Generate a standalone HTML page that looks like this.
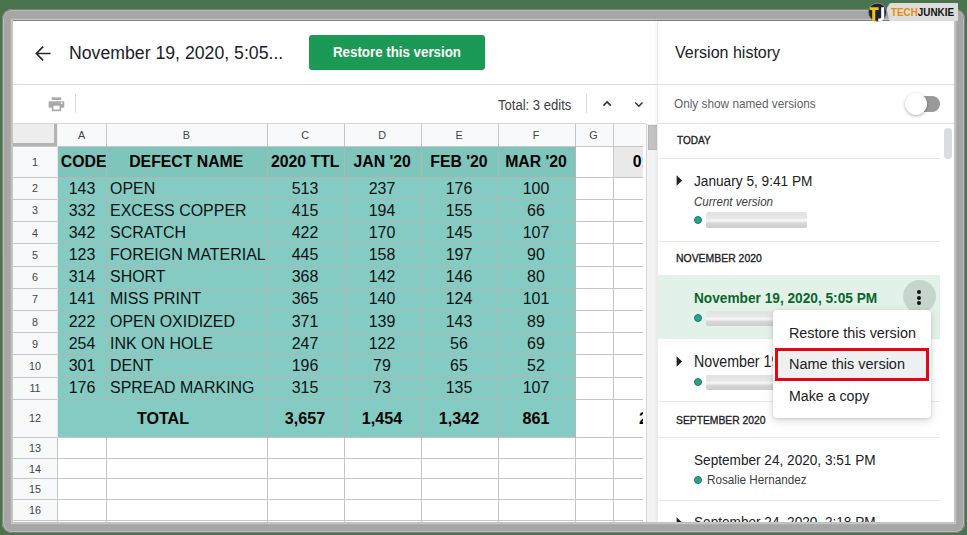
<!DOCTYPE html>
<html><head><meta charset="utf-8"><style>
html,body{margin:0;padding:0;}
body{width:967px;height:535px;position:relative;overflow:hidden;background:#49744e;font-family:"Liberation Sans",sans-serif;}
.t{position:absolute;white-space:nowrap;}
.r{position:absolute;}
svg.r{overflow:visible;}
</style></head><body>
<div class="r" style="left:2.00px;top:8.70px;width:963.00px;height:524.30px;background:#a6a6a6;border-radius:10px;box-shadow:inset 0 0 0 0.9px #7d7d7d, inset 0 0 0 2px #bababa;"></div>
<div class="r" style="left:13.00px;top:21.00px;width:940.70px;height:501.30px;background:#ffffff;box-shadow:0 -0.9px 0 0 #7a7a7a, 0 0 0 2.2px #c4c4c4;"></div>
<svg class="r" style="left:34px;top:43.5px" width="19" height="19" viewBox="0 0 19 19"><path d="M16.6 9.5H2.8M9.1 2.7L2.4 9.5l6.7 6.8" fill="none" stroke="#26282b" stroke-width="1.7"/></svg>
<div class="t" style="left:69.29px;top:43.00px;font-size:18.99px;line-height:18.99px;color:#202124;font-weight:normal;font-style:normal;transform:scaleX(0.9311);transform-origin:0 0;">November 19, 2020, 5:05...</div>
<div class="r" style="left:309.30px;top:34.70px;width:175.40px;height:35.30px;background:#1b9a55;border-radius:3px;"></div>
<div class="t" style="left:333.07px;top:45.00px;font-size:14.64px;line-height:14.64px;color:#fff;font-weight:bold;font-style:normal;transform:scaleX(0.9100);transform-origin:0 0;">Restore this version</div>
<div class="r" style="left:12.50px;top:84.00px;width:645.50px;height:1.00px;background:#dcdcdc;"></div>
<svg class="r" style="left:48px;top:96px" width="17" height="16" viewBox="0 0 17 16"><g fill="#a9a9a9"><rect x="3.8" y="1.3" width="9.4" height="2.7"/><rect x="0.6" y="5.3" width="15.7" height="6.5" rx="1.3"/><rect x="3.8" y="8.5" width="9.4" height="6.7"/></g><rect x="5.5" y="9.8" width="6" height="3.7" fill="#fff"/><circle cx="13.6" cy="7.2" r="0.9" fill="#fff"/></svg>
<div class="r" style="left:75.00px;top:94.00px;width:1.00px;height:19.00px;background:#dadce0;"></div>
<div class="t" style="left:498.44px;top:99.00px;font-size:13.77px;line-height:13.77px;color:#3c4043;font-weight:normal;font-style:normal;transform:scaleX(0.9496);transform-origin:0 0;">Total: 3 edits</div>
<div class="r" style="left:586.20px;top:94.40px;width:1.00px;height:19.10px;background:#dadce0;"></div>
<svg class="r" style="left:600px;top:98px" width="14" height="12" viewBox="0 0 14 12"><path d="M3.4 7.6L7.1 3.9l3.7 3.7" fill="none" stroke="#303134" stroke-width="1.5"/></svg>
<svg class="r" style="left:632px;top:98px" width="14" height="12" viewBox="0 0 14 12"><path d="M3.2 4.5L6.8 8.2l3.7-3.7" fill="none" stroke="#303134" stroke-width="1.5"/></svg>
<div class="r" style="left:12.50px;top:123.50px;width:633.50px;height:399.00px;background:#ffffff;"></div>
<div class="r" style="left:12.50px;top:123.50px;width:633.50px;height:22.50px;background:#f8f9fa;"></div>
<div class="r" style="left:12.50px;top:146.00px;width:45.00px;height:376.50px;background:#f8f9fa;"></div>
<div class="r" style="left:57.50px;top:146.00px;width:517.50px;height:31.20px;background:#7ec5bc;"></div>
<div class="r" style="left:57.50px;top:177.20px;width:517.50px;height:260.30px;background:#84ccc3;"></div>
<div class="r" style="left:613.00px;top:146.00px;width:30.00px;height:31.20px;background:#e9e9e9;"></div>
<div class="r" style="left:12.50px;top:123.00px;width:633.50px;height:1.00px;background:#d8d8d8;"></div>
<div class="r" style="left:12.50px;top:145.50px;width:630.50px;height:1.00px;background:#c6c6c6;"></div>
<div class="r" style="left:12.50px;top:176.70px;width:45.00px;height:1.00px;background:#c6c6c6;"></div>
<div class="r" style="left:575.00px;top:176.70px;width:68.00px;height:1.00px;background:#c6c6c6;"></div>
<div class="r" style="left:57.50px;top:176.70px;width:517.50px;height:1.00px;background:#adb8b5;"></div>
<div class="r" style="left:12.50px;top:198.90px;width:45.00px;height:1.00px;background:#c6c6c6;"></div>
<div class="r" style="left:575.00px;top:198.90px;width:68.00px;height:1.00px;background:#c6c6c6;"></div>
<div class="r" style="left:57.50px;top:198.90px;width:517.50px;height:1.00px;background:#adb8b5;"></div>
<div class="r" style="left:12.50px;top:221.10px;width:45.00px;height:1.00px;background:#c6c6c6;"></div>
<div class="r" style="left:575.00px;top:221.10px;width:68.00px;height:1.00px;background:#c6c6c6;"></div>
<div class="r" style="left:57.50px;top:221.10px;width:517.50px;height:1.00px;background:#adb8b5;"></div>
<div class="r" style="left:12.50px;top:243.30px;width:45.00px;height:1.00px;background:#c6c6c6;"></div>
<div class="r" style="left:575.00px;top:243.30px;width:68.00px;height:1.00px;background:#c6c6c6;"></div>
<div class="r" style="left:57.50px;top:243.30px;width:517.50px;height:1.00px;background:#adb8b5;"></div>
<div class="r" style="left:12.50px;top:265.50px;width:45.00px;height:1.00px;background:#c6c6c6;"></div>
<div class="r" style="left:575.00px;top:265.50px;width:68.00px;height:1.00px;background:#c6c6c6;"></div>
<div class="r" style="left:57.50px;top:265.50px;width:517.50px;height:1.00px;background:#adb8b5;"></div>
<div class="r" style="left:12.50px;top:287.70px;width:45.00px;height:1.00px;background:#c6c6c6;"></div>
<div class="r" style="left:575.00px;top:287.70px;width:68.00px;height:1.00px;background:#c6c6c6;"></div>
<div class="r" style="left:57.50px;top:287.70px;width:517.50px;height:1.00px;background:#adb8b5;"></div>
<div class="r" style="left:12.50px;top:309.90px;width:45.00px;height:1.00px;background:#c6c6c6;"></div>
<div class="r" style="left:575.00px;top:309.90px;width:68.00px;height:1.00px;background:#c6c6c6;"></div>
<div class="r" style="left:57.50px;top:309.90px;width:517.50px;height:1.00px;background:#adb8b5;"></div>
<div class="r" style="left:12.50px;top:332.10px;width:45.00px;height:1.00px;background:#c6c6c6;"></div>
<div class="r" style="left:575.00px;top:332.10px;width:68.00px;height:1.00px;background:#c6c6c6;"></div>
<div class="r" style="left:57.50px;top:332.10px;width:517.50px;height:1.00px;background:#adb8b5;"></div>
<div class="r" style="left:12.50px;top:354.30px;width:45.00px;height:1.00px;background:#c6c6c6;"></div>
<div class="r" style="left:575.00px;top:354.30px;width:68.00px;height:1.00px;background:#c6c6c6;"></div>
<div class="r" style="left:57.50px;top:354.30px;width:517.50px;height:1.00px;background:#adb8b5;"></div>
<div class="r" style="left:12.50px;top:376.50px;width:45.00px;height:1.00px;background:#c6c6c6;"></div>
<div class="r" style="left:575.00px;top:376.50px;width:68.00px;height:1.00px;background:#c6c6c6;"></div>
<div class="r" style="left:57.50px;top:376.50px;width:517.50px;height:1.00px;background:#adb8b5;"></div>
<div class="r" style="left:12.50px;top:398.70px;width:45.00px;height:1.00px;background:#c6c6c6;"></div>
<div class="r" style="left:575.00px;top:398.70px;width:68.00px;height:1.00px;background:#c6c6c6;"></div>
<div class="r" style="left:57.50px;top:398.70px;width:517.50px;height:1.00px;background:#adb8b5;"></div>
<div class="r" style="left:12.50px;top:437.00px;width:45.00px;height:1.00px;background:#c6c6c6;"></div>
<div class="r" style="left:575.00px;top:437.00px;width:68.00px;height:1.00px;background:#c6c6c6;"></div>
<div class="r" style="left:57.50px;top:437.00px;width:517.50px;height:1.00px;background:#c6c6c6;"></div>
<div class="r" style="left:12.50px;top:457.80px;width:45.00px;height:1.00px;background:#c6c6c6;"></div>
<div class="r" style="left:575.00px;top:457.80px;width:68.00px;height:1.00px;background:#c6c6c6;"></div>
<div class="r" style="left:57.50px;top:457.80px;width:517.50px;height:1.00px;background:#c6c6c6;"></div>
<div class="r" style="left:12.50px;top:478.30px;width:45.00px;height:1.00px;background:#c6c6c6;"></div>
<div class="r" style="left:575.00px;top:478.30px;width:68.00px;height:1.00px;background:#c6c6c6;"></div>
<div class="r" style="left:57.50px;top:478.30px;width:517.50px;height:1.00px;background:#c6c6c6;"></div>
<div class="r" style="left:12.50px;top:498.80px;width:45.00px;height:1.00px;background:#c6c6c6;"></div>
<div class="r" style="left:575.00px;top:498.80px;width:68.00px;height:1.00px;background:#c6c6c6;"></div>
<div class="r" style="left:57.50px;top:498.80px;width:517.50px;height:1.00px;background:#c6c6c6;"></div>
<div class="r" style="left:12.50px;top:519.80px;width:45.00px;height:1.00px;background:#c6c6c6;"></div>
<div class="r" style="left:575.00px;top:519.80px;width:68.00px;height:1.00px;background:#c6c6c6;"></div>
<div class="r" style="left:57.50px;top:519.80px;width:517.50px;height:1.00px;background:#c6c6c6;"></div>
<div class="r" style="left:57.00px;top:123.50px;width:1.00px;height:22.50px;background:#c6c6c6;"></div>
<div class="r" style="left:57.00px;top:146.00px;width:1.00px;height:291.50px;background:#e6e6e6;"></div>
<div class="r" style="left:57.00px;top:437.50px;width:1.00px;height:85.00px;background:#c6c6c6;"></div>
<div class="r" style="left:106.00px;top:123.50px;width:1.00px;height:22.50px;background:#c6c6c6;"></div>
<div class="r" style="left:106.00px;top:146.00px;width:1.00px;height:291.50px;background:#adb8b5;"></div>
<div class="r" style="left:106.00px;top:437.50px;width:1.00px;height:85.00px;background:#c6c6c6;"></div>
<div class="r" style="left:266.50px;top:123.50px;width:1.00px;height:22.50px;background:#c6c6c6;"></div>
<div class="r" style="left:266.50px;top:146.00px;width:1.00px;height:291.50px;background:#adb8b5;"></div>
<div class="r" style="left:266.50px;top:437.50px;width:1.00px;height:85.00px;background:#c6c6c6;"></div>
<div class="r" style="left:344.00px;top:123.50px;width:1.00px;height:22.50px;background:#c6c6c6;"></div>
<div class="r" style="left:344.00px;top:146.00px;width:1.00px;height:291.50px;background:#adb8b5;"></div>
<div class="r" style="left:344.00px;top:437.50px;width:1.00px;height:85.00px;background:#c6c6c6;"></div>
<div class="r" style="left:420.50px;top:123.50px;width:1.00px;height:22.50px;background:#c6c6c6;"></div>
<div class="r" style="left:420.50px;top:146.00px;width:1.00px;height:291.50px;background:#adb8b5;"></div>
<div class="r" style="left:420.50px;top:437.50px;width:1.00px;height:85.00px;background:#c6c6c6;"></div>
<div class="r" style="left:497.50px;top:123.50px;width:1.00px;height:22.50px;background:#c6c6c6;"></div>
<div class="r" style="left:497.50px;top:146.00px;width:1.00px;height:291.50px;background:#adb8b5;"></div>
<div class="r" style="left:497.50px;top:437.50px;width:1.00px;height:85.00px;background:#c6c6c6;"></div>
<div class="r" style="left:574.50px;top:123.50px;width:1.00px;height:22.50px;background:#c6c6c6;"></div>
<div class="r" style="left:574.50px;top:146.00px;width:1.00px;height:291.50px;background:#adb8b5;"></div>
<div class="r" style="left:574.50px;top:437.50px;width:1.00px;height:85.00px;background:#c6c6c6;"></div>
<div class="r" style="left:612.50px;top:123.50px;width:1.00px;height:399.00px;background:#c6c6c6;"></div>
<div class="r" style="left:106.00px;top:399.70px;width:1.00px;height:37.30px;background:#84ccc3;"></div>
<div class="r" style="left:12.50px;top:123.50px;width:45.00px;height:22.50px;background:#ededed;"></div>
<div class="r" style="left:53.80px;top:123.50px;width:3.50px;height:22.50px;background:#b3b3b3;"></div>
<div class="r" style="left:12.50px;top:142.80px;width:44.80px;height:3.20px;background:#b3b3b3;"></div>
<div class="t" style="left:-218.50px;top:130.00px;font-size:10.80px;line-height:10.80px;color:#444;font-weight:normal;font-style:normal;width:600px;text-align:center;">A</div>
<div class="t" style="left:-113.75px;top:130.00px;font-size:10.80px;line-height:10.80px;color:#444;font-weight:normal;font-style:normal;width:600px;text-align:center;">B</div>
<div class="t" style="left:5.25px;top:130.00px;font-size:10.80px;line-height:10.80px;color:#444;font-weight:normal;font-style:normal;width:600px;text-align:center;">C</div>
<div class="t" style="left:82.25px;top:130.00px;font-size:10.80px;line-height:10.80px;color:#444;font-weight:normal;font-style:normal;width:600px;text-align:center;">D</div>
<div class="t" style="left:159.00px;top:130.00px;font-size:10.80px;line-height:10.80px;color:#444;font-weight:normal;font-style:normal;width:600px;text-align:center;">E</div>
<div class="t" style="left:236.00px;top:130.00px;font-size:10.80px;line-height:10.80px;color:#444;font-weight:normal;font-style:normal;width:600px;text-align:center;">F</div>
<div class="t" style="left:293.50px;top:130.00px;font-size:10.80px;line-height:10.80px;color:#444;font-weight:normal;font-style:normal;width:600px;text-align:center;">G</div>
<div class="t" style="left:-265.00px;top:157.00px;font-size:10.80px;line-height:10.80px;color:#444;font-weight:normal;font-style:normal;width:600px;text-align:center;">1</div>
<div class="t" style="left:-265.00px;top:183.00px;font-size:10.80px;line-height:10.80px;color:#444;font-weight:normal;font-style:normal;width:600px;text-align:center;">2</div>
<div class="t" style="left:-265.00px;top:205.00px;font-size:10.80px;line-height:10.80px;color:#444;font-weight:normal;font-style:normal;width:600px;text-align:center;">3</div>
<div class="t" style="left:-265.00px;top:228.00px;font-size:10.80px;line-height:10.80px;color:#444;font-weight:normal;font-style:normal;width:600px;text-align:center;">4</div>
<div class="t" style="left:-265.00px;top:250.00px;font-size:10.80px;line-height:10.80px;color:#444;font-weight:normal;font-style:normal;width:600px;text-align:center;">5</div>
<div class="t" style="left:-265.00px;top:272.00px;font-size:10.80px;line-height:10.80px;color:#444;font-weight:normal;font-style:normal;width:600px;text-align:center;">6</div>
<div class="t" style="left:-265.00px;top:294.00px;font-size:10.80px;line-height:10.80px;color:#444;font-weight:normal;font-style:normal;width:600px;text-align:center;">7</div>
<div class="t" style="left:-265.00px;top:317.00px;font-size:10.80px;line-height:10.80px;color:#444;font-weight:normal;font-style:normal;width:600px;text-align:center;">8</div>
<div class="t" style="left:-265.00px;top:339.00px;font-size:10.80px;line-height:10.80px;color:#444;font-weight:normal;font-style:normal;width:600px;text-align:center;">9</div>
<div class="t" style="left:-265.00px;top:361.00px;font-size:10.80px;line-height:10.80px;color:#444;font-weight:normal;font-style:normal;width:600px;text-align:center;">10</div>
<div class="t" style="left:-265.00px;top:383.00px;font-size:10.80px;line-height:10.80px;color:#444;font-weight:normal;font-style:normal;width:600px;text-align:center;">11</div>
<div class="t" style="left:-265.00px;top:413.00px;font-size:10.80px;line-height:10.80px;color:#444;font-weight:normal;font-style:normal;width:600px;text-align:center;">12</div>
<div class="t" style="left:-265.00px;top:443.00px;font-size:10.80px;line-height:10.80px;color:#444;font-weight:normal;font-style:normal;width:600px;text-align:center;">13</div>
<div class="t" style="left:-265.00px;top:464.00px;font-size:10.80px;line-height:10.80px;color:#444;font-weight:normal;font-style:normal;width:600px;text-align:center;">14</div>
<div class="t" style="left:-265.00px;top:484.00px;font-size:10.80px;line-height:10.80px;color:#444;font-weight:normal;font-style:normal;width:600px;text-align:center;">15</div>
<div class="t" style="left:-265.00px;top:505.00px;font-size:10.80px;line-height:10.80px;color:#444;font-weight:normal;font-style:normal;width:600px;text-align:center;">16</div>
<div class="t" style="left:60.87px;top:154.00px;font-size:15.80px;line-height:15.80px;color:#000;font-weight:bold;font-style:normal;width:45.13px;overflow:hidden;">CODE</div>
<div class="t" style="left:-113.75px;top:154.00px;font-size:15.80px;line-height:15.80px;color:#000;font-weight:bold;font-style:normal;width:600px;text-align:center;">DEFECT NAME</div>
<div class="t" style="left:5.25px;top:154.00px;font-size:15.80px;line-height:15.80px;color:#000;font-weight:bold;font-style:normal;width:600px;text-align:center;">2020 TTL</div>
<div class="t" style="left:82.25px;top:154.00px;font-size:15.80px;line-height:15.80px;color:#000;font-weight:bold;font-style:normal;width:600px;text-align:center;">JAN '20</div>
<div class="t" style="left:159.00px;top:154.00px;font-size:15.80px;line-height:15.80px;color:#000;font-weight:bold;font-style:normal;width:600px;text-align:center;">FEB '20</div>
<div class="t" style="left:236.00px;top:154.00px;font-size:15.80px;line-height:15.80px;color:#000;font-weight:bold;font-style:normal;width:600px;text-align:center;">MAR '20</div>
<div class="t" style="left:632.77px;top:154.00px;font-size:15.80px;line-height:15.80px;color:#000;font-weight:bold;font-style:normal;width:10.23px;overflow:hidden;">0:</div>
<div class="t" style="left:-218.50px;top:180.00px;font-size:16.30px;line-height:16.30px;color:#111;font-weight:normal;font-style:normal;transform:scaleX(0.9800);transform-origin:300px 0;width:600px;text-align:center;">143</div>
<div class="t" style="left:110.03px;top:180.00px;font-size:16.30px;line-height:16.30px;color:#111;font-weight:normal;font-style:normal;transform:scaleX(0.9800);transform-origin:0 0;">OPEN</div>
<div class="t" style="left:5.25px;top:180.00px;font-size:16.30px;line-height:16.30px;color:#111;font-weight:normal;font-style:normal;transform:scaleX(0.9800);transform-origin:300px 0;width:600px;text-align:center;">513</div>
<div class="t" style="left:82.25px;top:180.00px;font-size:16.30px;line-height:16.30px;color:#111;font-weight:normal;font-style:normal;transform:scaleX(0.9800);transform-origin:300px 0;width:600px;text-align:center;">237</div>
<div class="t" style="left:159.00px;top:180.00px;font-size:16.30px;line-height:16.30px;color:#111;font-weight:normal;font-style:normal;transform:scaleX(0.9800);transform-origin:300px 0;width:600px;text-align:center;">176</div>
<div class="t" style="left:236.00px;top:180.00px;font-size:16.30px;line-height:16.30px;color:#111;font-weight:normal;font-style:normal;transform:scaleX(0.9800);transform-origin:300px 0;width:600px;text-align:center;">100</div>
<div class="t" style="left:-218.50px;top:202.00px;font-size:16.30px;line-height:16.30px;color:#111;font-weight:normal;font-style:normal;transform:scaleX(0.9800);transform-origin:300px 0;width:600px;text-align:center;">332</div>
<div class="t" style="left:110.03px;top:202.00px;font-size:16.30px;line-height:16.30px;color:#111;font-weight:normal;font-style:normal;transform:scaleX(0.9800);transform-origin:0 0;">EXCESS COPPER</div>
<div class="t" style="left:5.25px;top:202.00px;font-size:16.30px;line-height:16.30px;color:#111;font-weight:normal;font-style:normal;transform:scaleX(0.9800);transform-origin:300px 0;width:600px;text-align:center;">415</div>
<div class="t" style="left:82.25px;top:202.00px;font-size:16.30px;line-height:16.30px;color:#111;font-weight:normal;font-style:normal;transform:scaleX(0.9800);transform-origin:300px 0;width:600px;text-align:center;">194</div>
<div class="t" style="left:159.00px;top:202.00px;font-size:16.30px;line-height:16.30px;color:#111;font-weight:normal;font-style:normal;transform:scaleX(0.9800);transform-origin:300px 0;width:600px;text-align:center;">155</div>
<div class="t" style="left:236.00px;top:202.00px;font-size:16.30px;line-height:16.30px;color:#111;font-weight:normal;font-style:normal;transform:scaleX(0.9800);transform-origin:300px 0;width:600px;text-align:center;">66</div>
<div class="t" style="left:-218.50px;top:224.00px;font-size:16.30px;line-height:16.30px;color:#111;font-weight:normal;font-style:normal;transform:scaleX(0.9800);transform-origin:300px 0;width:600px;text-align:center;">342</div>
<div class="t" style="left:110.03px;top:224.00px;font-size:16.30px;line-height:16.30px;color:#111;font-weight:normal;font-style:normal;transform:scaleX(0.9800);transform-origin:0 0;">SCRATCH</div>
<div class="t" style="left:5.25px;top:224.00px;font-size:16.30px;line-height:16.30px;color:#111;font-weight:normal;font-style:normal;transform:scaleX(0.9800);transform-origin:300px 0;width:600px;text-align:center;">422</div>
<div class="t" style="left:82.25px;top:224.00px;font-size:16.30px;line-height:16.30px;color:#111;font-weight:normal;font-style:normal;transform:scaleX(0.9800);transform-origin:300px 0;width:600px;text-align:center;">170</div>
<div class="t" style="left:159.00px;top:224.00px;font-size:16.30px;line-height:16.30px;color:#111;font-weight:normal;font-style:normal;transform:scaleX(0.9800);transform-origin:300px 0;width:600px;text-align:center;">145</div>
<div class="t" style="left:236.00px;top:224.00px;font-size:16.30px;line-height:16.30px;color:#111;font-weight:normal;font-style:normal;transform:scaleX(0.9800);transform-origin:300px 0;width:600px;text-align:center;">107</div>
<div class="t" style="left:-218.50px;top:246.00px;font-size:16.30px;line-height:16.30px;color:#111;font-weight:normal;font-style:normal;transform:scaleX(0.9800);transform-origin:300px 0;width:600px;text-align:center;">123</div>
<div class="t" style="left:110.03px;top:246.00px;font-size:16.30px;line-height:16.30px;color:#111;font-weight:normal;font-style:normal;transform:scaleX(0.9800);transform-origin:0 0;">FOREIGN MATERIAL</div>
<div class="t" style="left:5.25px;top:246.00px;font-size:16.30px;line-height:16.30px;color:#111;font-weight:normal;font-style:normal;transform:scaleX(0.9800);transform-origin:300px 0;width:600px;text-align:center;">445</div>
<div class="t" style="left:82.25px;top:246.00px;font-size:16.30px;line-height:16.30px;color:#111;font-weight:normal;font-style:normal;transform:scaleX(0.9800);transform-origin:300px 0;width:600px;text-align:center;">158</div>
<div class="t" style="left:159.00px;top:246.00px;font-size:16.30px;line-height:16.30px;color:#111;font-weight:normal;font-style:normal;transform:scaleX(0.9800);transform-origin:300px 0;width:600px;text-align:center;">197</div>
<div class="t" style="left:236.00px;top:246.00px;font-size:16.30px;line-height:16.30px;color:#111;font-weight:normal;font-style:normal;transform:scaleX(0.9800);transform-origin:300px 0;width:600px;text-align:center;">90</div>
<div class="t" style="left:-218.50px;top:268.00px;font-size:16.30px;line-height:16.30px;color:#111;font-weight:normal;font-style:normal;transform:scaleX(0.9800);transform-origin:300px 0;width:600px;text-align:center;">314</div>
<div class="t" style="left:110.03px;top:268.00px;font-size:16.30px;line-height:16.30px;color:#111;font-weight:normal;font-style:normal;transform:scaleX(0.9800);transform-origin:0 0;">SHORT</div>
<div class="t" style="left:5.25px;top:268.00px;font-size:16.30px;line-height:16.30px;color:#111;font-weight:normal;font-style:normal;transform:scaleX(0.9800);transform-origin:300px 0;width:600px;text-align:center;">368</div>
<div class="t" style="left:82.25px;top:268.00px;font-size:16.30px;line-height:16.30px;color:#111;font-weight:normal;font-style:normal;transform:scaleX(0.9800);transform-origin:300px 0;width:600px;text-align:center;">142</div>
<div class="t" style="left:159.00px;top:268.00px;font-size:16.30px;line-height:16.30px;color:#111;font-weight:normal;font-style:normal;transform:scaleX(0.9800);transform-origin:300px 0;width:600px;text-align:center;">146</div>
<div class="t" style="left:236.00px;top:268.00px;font-size:16.30px;line-height:16.30px;color:#111;font-weight:normal;font-style:normal;transform:scaleX(0.9800);transform-origin:300px 0;width:600px;text-align:center;">80</div>
<div class="t" style="left:-218.50px;top:290.00px;font-size:16.30px;line-height:16.30px;color:#111;font-weight:normal;font-style:normal;transform:scaleX(0.9800);transform-origin:300px 0;width:600px;text-align:center;">141</div>
<div class="t" style="left:110.03px;top:290.00px;font-size:16.30px;line-height:16.30px;color:#111;font-weight:normal;font-style:normal;transform:scaleX(0.9800);transform-origin:0 0;">MISS PRINT</div>
<div class="t" style="left:5.25px;top:290.00px;font-size:16.30px;line-height:16.30px;color:#111;font-weight:normal;font-style:normal;transform:scaleX(0.9800);transform-origin:300px 0;width:600px;text-align:center;">365</div>
<div class="t" style="left:82.25px;top:290.00px;font-size:16.30px;line-height:16.30px;color:#111;font-weight:normal;font-style:normal;transform:scaleX(0.9800);transform-origin:300px 0;width:600px;text-align:center;">140</div>
<div class="t" style="left:159.00px;top:290.00px;font-size:16.30px;line-height:16.30px;color:#111;font-weight:normal;font-style:normal;transform:scaleX(0.9800);transform-origin:300px 0;width:600px;text-align:center;">124</div>
<div class="t" style="left:236.00px;top:290.00px;font-size:16.30px;line-height:16.30px;color:#111;font-weight:normal;font-style:normal;transform:scaleX(0.9800);transform-origin:300px 0;width:600px;text-align:center;">101</div>
<div class="t" style="left:-218.50px;top:313.00px;font-size:16.30px;line-height:16.30px;color:#111;font-weight:normal;font-style:normal;transform:scaleX(0.9800);transform-origin:300px 0;width:600px;text-align:center;">222</div>
<div class="t" style="left:110.03px;top:313.00px;font-size:16.30px;line-height:16.30px;color:#111;font-weight:normal;font-style:normal;transform:scaleX(0.9800);transform-origin:0 0;">OPEN OXIDIZED</div>
<div class="t" style="left:5.25px;top:313.00px;font-size:16.30px;line-height:16.30px;color:#111;font-weight:normal;font-style:normal;transform:scaleX(0.9800);transform-origin:300px 0;width:600px;text-align:center;">371</div>
<div class="t" style="left:82.25px;top:313.00px;font-size:16.30px;line-height:16.30px;color:#111;font-weight:normal;font-style:normal;transform:scaleX(0.9800);transform-origin:300px 0;width:600px;text-align:center;">139</div>
<div class="t" style="left:159.00px;top:313.00px;font-size:16.30px;line-height:16.30px;color:#111;font-weight:normal;font-style:normal;transform:scaleX(0.9800);transform-origin:300px 0;width:600px;text-align:center;">143</div>
<div class="t" style="left:236.00px;top:313.00px;font-size:16.30px;line-height:16.30px;color:#111;font-weight:normal;font-style:normal;transform:scaleX(0.9800);transform-origin:300px 0;width:600px;text-align:center;">89</div>
<div class="t" style="left:-218.50px;top:335.00px;font-size:16.30px;line-height:16.30px;color:#111;font-weight:normal;font-style:normal;transform:scaleX(0.9800);transform-origin:300px 0;width:600px;text-align:center;">254</div>
<div class="t" style="left:110.03px;top:335.00px;font-size:16.30px;line-height:16.30px;color:#111;font-weight:normal;font-style:normal;transform:scaleX(0.9800);transform-origin:0 0;">INK ON HOLE</div>
<div class="t" style="left:5.25px;top:335.00px;font-size:16.30px;line-height:16.30px;color:#111;font-weight:normal;font-style:normal;transform:scaleX(0.9800);transform-origin:300px 0;width:600px;text-align:center;">247</div>
<div class="t" style="left:82.25px;top:335.00px;font-size:16.30px;line-height:16.30px;color:#111;font-weight:normal;font-style:normal;transform:scaleX(0.9800);transform-origin:300px 0;width:600px;text-align:center;">122</div>
<div class="t" style="left:159.00px;top:335.00px;font-size:16.30px;line-height:16.30px;color:#111;font-weight:normal;font-style:normal;transform:scaleX(0.9800);transform-origin:300px 0;width:600px;text-align:center;">56</div>
<div class="t" style="left:236.00px;top:335.00px;font-size:16.30px;line-height:16.30px;color:#111;font-weight:normal;font-style:normal;transform:scaleX(0.9800);transform-origin:300px 0;width:600px;text-align:center;">69</div>
<div class="t" style="left:-218.50px;top:357.00px;font-size:16.30px;line-height:16.30px;color:#111;font-weight:normal;font-style:normal;transform:scaleX(0.9800);transform-origin:300px 0;width:600px;text-align:center;">301</div>
<div class="t" style="left:110.03px;top:357.00px;font-size:16.30px;line-height:16.30px;color:#111;font-weight:normal;font-style:normal;transform:scaleX(0.9800);transform-origin:0 0;">DENT</div>
<div class="t" style="left:5.25px;top:357.00px;font-size:16.30px;line-height:16.30px;color:#111;font-weight:normal;font-style:normal;transform:scaleX(0.9800);transform-origin:300px 0;width:600px;text-align:center;">196</div>
<div class="t" style="left:82.25px;top:357.00px;font-size:16.30px;line-height:16.30px;color:#111;font-weight:normal;font-style:normal;transform:scaleX(0.9800);transform-origin:300px 0;width:600px;text-align:center;">79</div>
<div class="t" style="left:159.00px;top:357.00px;font-size:16.30px;line-height:16.30px;color:#111;font-weight:normal;font-style:normal;transform:scaleX(0.9800);transform-origin:300px 0;width:600px;text-align:center;">65</div>
<div class="t" style="left:236.00px;top:357.00px;font-size:16.30px;line-height:16.30px;color:#111;font-weight:normal;font-style:normal;transform:scaleX(0.9800);transform-origin:300px 0;width:600px;text-align:center;">52</div>
<div class="t" style="left:-218.50px;top:379.00px;font-size:16.30px;line-height:16.30px;color:#111;font-weight:normal;font-style:normal;transform:scaleX(0.9800);transform-origin:300px 0;width:600px;text-align:center;">176</div>
<div class="t" style="left:110.03px;top:379.00px;font-size:16.30px;line-height:16.30px;color:#111;font-weight:normal;font-style:normal;transform:scaleX(0.9800);transform-origin:0 0;">SPREAD MARKING</div>
<div class="t" style="left:5.25px;top:379.00px;font-size:16.30px;line-height:16.30px;color:#111;font-weight:normal;font-style:normal;transform:scaleX(0.9800);transform-origin:300px 0;width:600px;text-align:center;">315</div>
<div class="t" style="left:82.25px;top:379.00px;font-size:16.30px;line-height:16.30px;color:#111;font-weight:normal;font-style:normal;transform:scaleX(0.9800);transform-origin:300px 0;width:600px;text-align:center;">73</div>
<div class="t" style="left:159.00px;top:379.00px;font-size:16.30px;line-height:16.30px;color:#111;font-weight:normal;font-style:normal;transform:scaleX(0.9800);transform-origin:300px 0;width:600px;text-align:center;">135</div>
<div class="t" style="left:236.00px;top:379.00px;font-size:16.30px;line-height:16.30px;color:#111;font-weight:normal;font-style:normal;transform:scaleX(0.9800);transform-origin:300px 0;width:600px;text-align:center;">107</div>
<div class="t" style="left:-137.30px;top:411.00px;font-size:16.60px;line-height:16.60px;color:#000;font-weight:bold;font-style:normal;transform:scaleX(0.9700);transform-origin:300px 0;width:600px;text-align:center;">TOTAL</div>
<div class="t" style="left:5.25px;top:411.00px;font-size:16.60px;line-height:16.60px;color:#000;font-weight:bold;font-style:normal;transform:scaleX(0.9700);transform-origin:300px 0;width:600px;text-align:center;">3,657</div>
<div class="t" style="left:82.25px;top:411.00px;font-size:16.60px;line-height:16.60px;color:#000;font-weight:bold;font-style:normal;transform:scaleX(0.9700);transform-origin:300px 0;width:600px;text-align:center;">1,454</div>
<div class="t" style="left:159.00px;top:411.00px;font-size:16.60px;line-height:16.60px;color:#000;font-weight:bold;font-style:normal;transform:scaleX(0.9700);transform-origin:300px 0;width:600px;text-align:center;">1,342</div>
<div class="t" style="left:236.00px;top:411.00px;font-size:16.60px;line-height:16.60px;color:#000;font-weight:bold;font-style:normal;transform:scaleX(0.9700);transform-origin:300px 0;width:600px;text-align:center;">861</div>
<div class="t" style="left:638.82px;top:411.00px;font-size:16.60px;line-height:16.60px;color:#000;font-weight:bold;font-style:normal;transform:scaleX(0.9700);transform-origin:0 0;width:4.31px;overflow:hidden;">2</div>
<div class="r" style="left:646.00px;top:123.50px;width:12.00px;height:399.00px;background:#f3f3f3;box-sizing:border-box;border-left:1px solid #d6d6d6;"></div>
<div class="r" style="left:647.60px;top:124.60px;width:10.10px;height:25.70px;background:#c3c3c3;box-sizing:border-box;border:1px solid #b5b5b5;"></div>
<div class="r" style="left:658.00px;top:20.50px;width:296.20px;height:502.00px;background:#ffffff;box-shadow:-1px 0 0 #ececec, -2px 0 3px rgba(0,0,0,0.05);"></div>
<div class="t" style="left:674.84px;top:44.00px;font-size:17.25px;line-height:17.25px;color:#202124;font-weight:normal;font-style:normal;transform:scaleX(0.9290);transform-origin:0 0;">Version history</div>
<div class="r" style="left:658.00px;top:84.00px;width:296.20px;height:1.00px;background:#e0e0e0;"></div>
<div class="t" style="left:674.41px;top:97.00px;font-size:13.62px;line-height:13.62px;color:#5f6368;font-weight:normal;font-style:normal;transform:scaleX(0.8673);transform-origin:0 0;">Only show named versions</div>
<div class="r" style="left:907.00px;top:95.80px;width:33.00px;height:15.80px;background:#9a9a9a;border-radius:8px;"></div>
<div class="r" style="left:905px;top:93px;width:22px;height:22px;border-radius:50%;background:#fff;box-shadow:0 1px 3px rgba(0,0,0,0.35);"></div>
<div class="r" style="left:658.00px;top:123.00px;width:296.20px;height:1.00px;background:#e0e0e0;"></div>
<div class="r" style="left:944.00px;top:127.60px;width:7.60px;height:31.40px;background:#dadce0;border-radius:4px;"></div>
<div class="t" style="left:676.80px;top:135.00px;font-size:10.87px;line-height:10.87px;color:#202124;font-weight:normal;font-style:normal;transform:scaleX(0.9227);transform-origin:0 0;-webkit-text-stroke:0.35px #202124;">TODAY</div>
<div class="r" style="left:658.00px;top:158.00px;width:282.00px;height:1.00px;background:#e8e8e8;"></div>
<svg class="r" style="left:676px;top:175px" width="7" height="12" viewBox="0 0 7 12"><path d="M0.6 0.3L6.2 5.5 0.6 10.7z" fill="#202124"/></svg>
<div class="t" style="left:694.23px;top:174.00px;font-size:14.93px;line-height:14.93px;color:#202124;font-weight:normal;font-style:normal;transform:scaleX(0.9152);transform-origin:0 0;">January 5, 9:41 PM</div>
<div class="t" style="left:693.81px;top:197.00px;font-size:11.88px;line-height:11.88px;color:#3c4043;font-weight:normal;font-style:italic;transform:scaleX(0.9731);transform-origin:0 0;">Current version</div>
<div class="r" style="left:694.40px;top:215.80px;width:8px;height:8px;border-radius:50%;background:#2b9e90;box-sizing:border-box;border:1px solid #1b7d71;"></div>
<div class="r" style="left:706px;top:212px;width:101px;height:16px;border-radius:2px;background:linear-gradient(#e2e2e2 0%, #e6e6e6 35%, #f7f7f7 52%, #f0f0f0 58%, #d7d7d7 70%, #cdcdcd 100%);"></div>
<div class="r" style="left:658.00px;top:240.50px;width:282.00px;height:1.00px;background:#e8e8e8;"></div>
<div class="t" style="left:675.76px;top:253.00px;font-size:11.59px;line-height:11.59px;color:#202124;font-weight:normal;font-style:normal;transform:scaleX(0.9011);transform-origin:0 0;-webkit-text-stroke:0.35px #202124;">NOVEMBER 2020</div>
<div class="r" style="left:658.00px;top:275.00px;width:282.00px;height:64.00px;background:#e3f2e9;"></div>
<div class="t" style="left:693.64px;top:290.00px;font-size:15.07px;line-height:15.07px;color:#0d652d;font-weight:bold;font-style:normal;transform:scaleX(0.9078);transform-origin:0 0;">November 19, 2020, 5:05 PM</div>
<div class="r" style="left:902.8px;top:280px;width:33.2px;height:33.2px;border-radius:50%;background:#c6d6cd;"></div>
<div class="r" style="left:917.3px;top:289.7px;width:4.2px;height:4.2px;border-radius:50%;background:#111;"></div>
<div class="r" style="left:917.3px;top:295.5px;width:4.2px;height:4.2px;border-radius:50%;background:#111;"></div>
<div class="r" style="left:917.3px;top:301.3px;width:4.2px;height:4.2px;border-radius:50%;background:#111;"></div>
<div class="r" style="left:693.70px;top:314.20px;width:8px;height:8px;border-radius:50%;background:#2b9e90;box-sizing:border-box;border:1px solid #1b7d71;"></div>
<div class="r" style="left:706px;top:311px;width:101px;height:15px;border-radius:2px;background:linear-gradient(#e2e2e2 0%, #e6e6e6 35%, #f7f7f7 52%, #f0f0f0 58%, #d7d7d7 70%, #cdcdcd 100%);"></div>
<svg class="r" style="left:676px;top:355.5px" width="7" height="12" viewBox="0 0 7 12"><path d="M0.6 0.3L6.2 5.5 0.6 10.7z" fill="#202124"/></svg>
<div class="t" style="left:694.16px;top:354.00px;font-size:15.80px;line-height:15.80px;color:#202124;font-weight:normal;font-style:normal;transform:scaleX(0.9000);transform-origin:0 0;">November 19, 2020, 5:05 PM</div>
<div class="r" style="left:693.70px;top:377.60px;width:8px;height:8px;border-radius:50%;background:#2b9e90;box-sizing:border-box;border:1px solid #1b7d71;"></div>
<div class="r" style="left:706px;top:375px;width:101px;height:15px;border-radius:2px;background:linear-gradient(#e2e2e2 0%, #e6e6e6 35%, #f7f7f7 52%, #f0f0f0 58%, #d7d7d7 70%, #cdcdcd 100%);"></div>
<div class="r" style="left:658.00px;top:401.00px;width:282.00px;height:1.00px;background:#e8e8e8;"></div>
<div class="t" style="left:676.38px;top:415.00px;font-size:11.45px;line-height:11.45px;color:#202124;font-weight:normal;font-style:normal;transform:scaleX(0.9019);transform-origin:0 0;-webkit-text-stroke:0.35px #202124;">SEPTEMBER 2020</div>
<div class="r" style="left:658.00px;top:436.50px;width:282.00px;height:1.00px;background:#e8e8e8;"></div>
<div class="t" style="left:694.02px;top:453.00px;font-size:14.78px;line-height:14.78px;color:#202124;font-weight:normal;font-style:normal;transform:scaleX(0.9219);transform-origin:0 0;">September 24, 2020, 3:51 PM</div>
<div class="r" style="left:694.00px;top:476.20px;width:8px;height:8px;border-radius:50%;background:#2b9e90;box-sizing:border-box;border:1px solid #1b7d71;"></div>
<div class="t" style="left:706.76px;top:474.00px;font-size:12.17px;line-height:12.17px;color:#3c4043;font-weight:normal;font-style:normal;transform:scaleX(0.9639);transform-origin:0 0;">Rosalie Hernandez</div>
<div class="r" style="left:658.00px;top:500.00px;width:282.00px;height:1.00px;background:#e8e8e8;"></div>
<svg class="r" style="left:676px;top:517px" width="7" height="12" viewBox="0 0 7 12"><path d="M0.6 0.3L6.2 5.5 0.6 10.7z" fill="#202124"/></svg>
<div class="t" style="left:694.02px;top:515.00px;font-size:14.78px;line-height:14.78px;color:#202124;font-weight:normal;font-style:normal;transform:scaleX(0.9219);transform-origin:0 0;">September 24, 2020, 2:18 PM</div>
<div class="r" style="left:773.4px;top:309.7px;width:157.4px;height:108px;border-radius:4px;background:#fff;box-shadow:0 1px 3px rgba(0,0,0,0.12), 0 3px 10px rgba(0,0,0,0.13);"></div>
<div class="t" style="left:788.75px;top:325.00px;font-size:15.51px;line-height:15.51px;color:#202124;font-weight:normal;font-style:normal;transform:scaleX(0.9267);transform-origin:0 0;">Restore this version</div>
<div class="r" style="left:774.6px;top:347.9px;width:154.7px;height:33px;box-sizing:border-box;border:3.4px solid #e5060f;background:#eef0f2;"></div>
<div class="t" style="left:788.74px;top:356.00px;font-size:15.36px;line-height:15.36px;color:#202124;font-weight:normal;font-style:normal;transform:scaleX(0.9434);transform-origin:0 0;">Name this version</div>
<div class="t" style="left:788.76px;top:389.00px;font-size:14.64px;line-height:14.64px;color:#202124;font-weight:normal;font-style:normal;transform:scaleX(0.9702);transform-origin:0 0;">Make a copy</div>
<div class="r" style="left:13.00px;top:522.30px;width:940.70px;height:8.70px;background:#a6a6a6;box-shadow:inset 0 2.2px 0 #c4c4c4;"></div>
<div class="r" style="left:886.5px;top:3px;width:71.5px;height:18.3px;background:#dcdcdc;clip-path:polygon(3.5px 0,100% 0,100% 100%,3px 100%,0 5.5px);"></div>
<svg class="r" style="left:867px;top:3px" width="21" height="19" viewBox="0 0 21 19"><circle cx="10.4" cy="9.25" r="9.1" fill="#1b2233" stroke="#8d8d8d" stroke-width="0.9"/><path d="M2.7 4.3h8.9v2.6h-3.3v10.9h-3.1V6.9H2.7z" fill="#f2c515"/><path d="M14.2 4.3h3v9.6c0 2.7-1.4 4.1-4 4.1h-2v-2.6h1.6c1 0 1.4-0.5 1.4-1.6z" fill="#ffffff"/></svg>
<div class="t" style="left:890.90px;top:8.00px;font-size:10.00px;line-height:10.00px;color:#111;font-weight:bold;font-style:normal;transform:scaleX(0.9858);transform-origin:0 0;"><span style="color:#ea8c0c">TECH</span>JUNKIE</div>
</body></html>
